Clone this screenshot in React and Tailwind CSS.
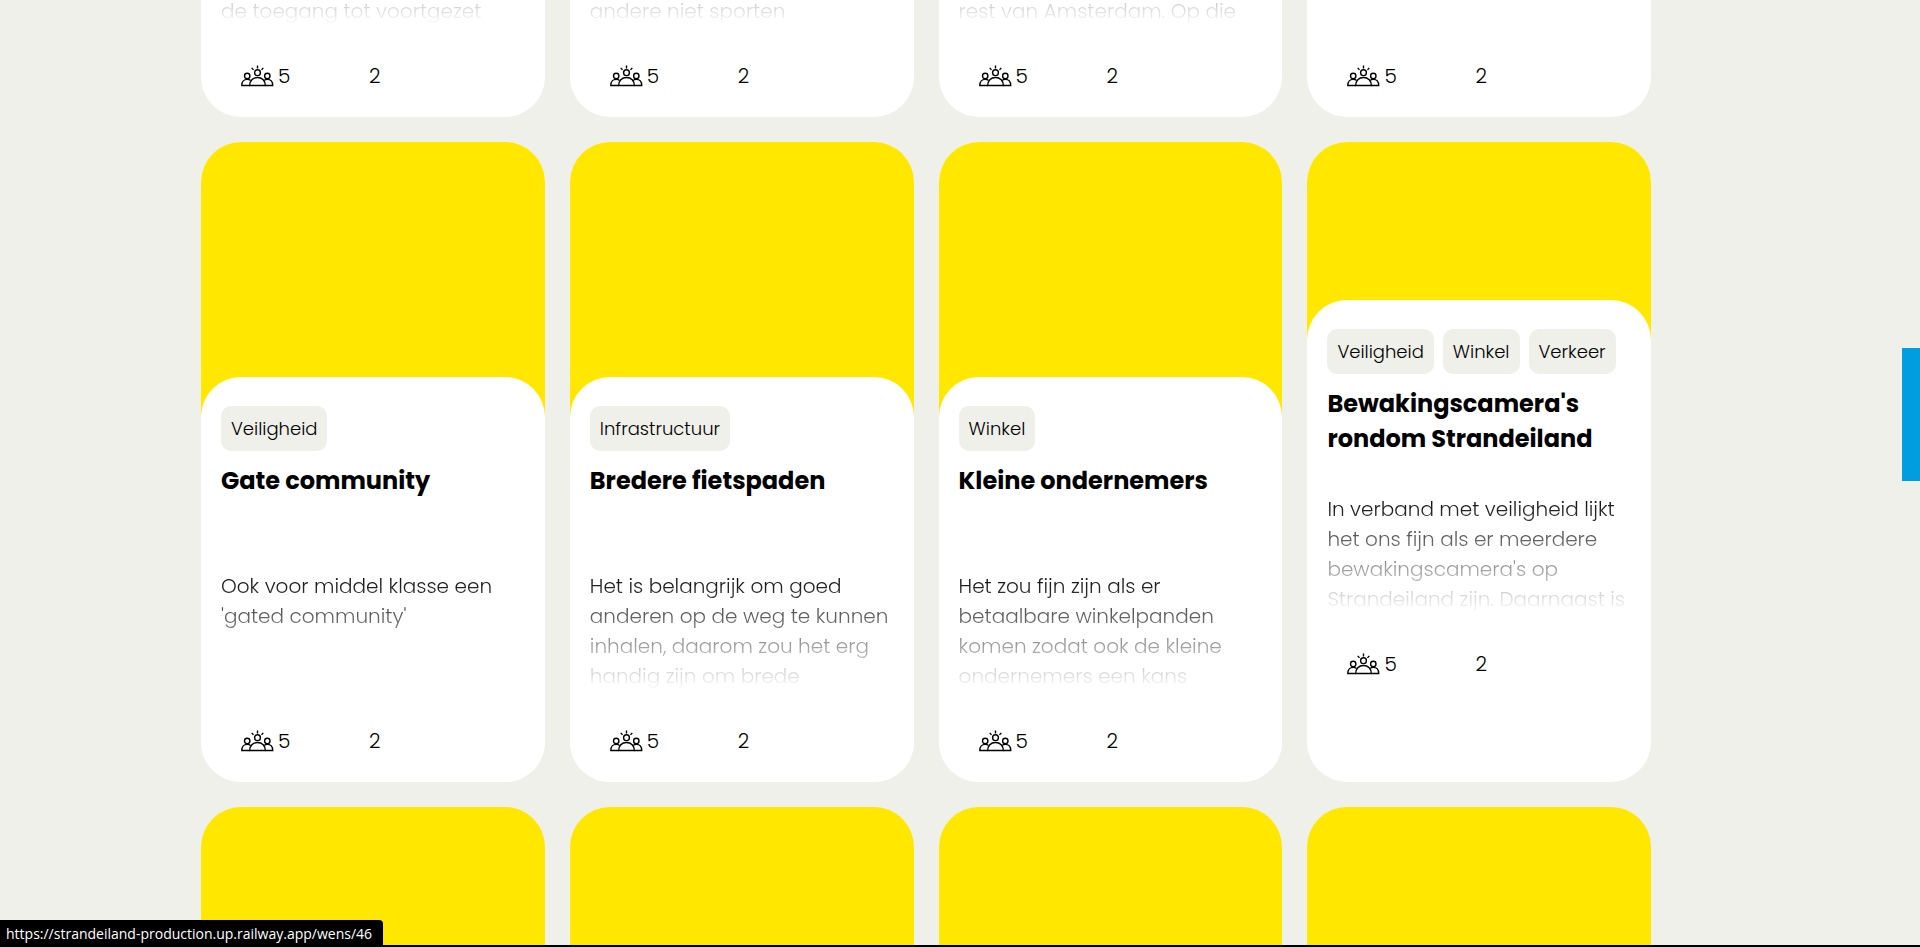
const wishes = [
  {
    id: 46,
    tags: ["Veiligheid"],
    title: ["Gate community"],
    text: ["Ook voor middel klasse een", "'gated community'"],
  },
  {
    id: 47,
    tags: ["Infrastructuur"],
    title: ["Bredere fietspaden"],
    text: [
      "Het is belangrijk om goed",
      "anderen op de weg te kunnen",
      "inhalen, daarom zou het erg",
      "handig zijn om brede",
    ],
  },
  {
    id: 48,
    tags: ["Winkel"],
    title: ["Kleine ondernemers"],
    text: [
      "Het zou fijn zijn als er",
      "betaalbare winkelpanden",
      "komen zodat ook de kleine",
      "ondernemers een kans",
    ],
  },
  {
    id: 49,
    compact: true,
    tags: ["Veiligheid", "Winkel", "Verkeer"],
    title: ["Bewakingscamera's", "rondom Strandeiland"],
    text: [
      "In verband met veiligheid lijkt",
      "het ons fijn als er meerdere",
      "bewakingscamera's op",
      "Strandeiland zijn. Daarnaast is",
    ],
  },
];

const previous = [
  { id: 42, text: ["de toegang tot voortgezet"] },
  { id: 43, text: ["andere niet sporten"] },
  { id: 44, text: ["rest van Amsterdam. Op die"] },
  { id: 45, text: [] },
];

const upcoming = [50, 51, 52, 53];

function PeopleIcon() {
  return (
    <svg
      viewBox="0 0 33 22"
      className="h-[22px] w-[33px] shrink-0"
      fill="none"
      stroke="currentColor"
      strokeWidth="1.4"
      aria-hidden="true"
    >
      <circle cx="16.5" cy="7.7" r="2.9" />
      <circle cx="6.2" cy="11" r="2.7" />
      <circle cx="26.3" cy="11" r="2.7" />
      <path d="M16.5 0.4v3M10.7 2.9l1.8 2M22.3 2.9l-1.8 2" />
      <path d="M8.7 20.5c0-4.6 3-8 7.8-8s7.8 3.4 7.8 8z" />
      <path d="M9.6 15.5c-.9-.8-2-1.1-3.4-1.1-3.2 0-5.4 2.4-5.4 6.1h7.9M23.1 15.5c.9-.8 2-1.1 3.2-1.1 3.2 0 5.4 2.4 5.4 6.1h-7.4" />
    </svg>
  );
}

function Excerpt({ lines, atEnd }) {
  return (
    <p
      className={
        "flex h-[120px] flex-col overflow-hidden whitespace-nowrap text-[20px] leading-[30px] mask-b-from-0% mask-b-to-100% " +
        (atEnd ? "justify-end" : "justify-start")
      }
    >
      {lines.map((line) => (
        <span key={line} className="block">
          {line}{" "}
        </span>
      ))}
    </p>
  );
}

function Stats() {
  return (
    <div className="flex h-[30px] items-center pl-5 text-[20px] leading-[30px]">
      <span className="flex w-32 items-center gap-1">
        <PeopleIcon />5
      </span>
      <span>2</span>
    </div>
  );
}

function WishCard({ wish }) {
  return (
    <a
      href={"/wens/" + wish.id}
      className="block overflow-hidden rounded-[40px] bg-white"
    >
      <div
        className={
          "bg-[#ffe700] " + (wish.compact ? "h-[198px]" : "h-[275px]")
        }
      />
      <div className="-mt-10 rounded-t-[40px] bg-white px-5 pt-[29px] pb-[26px]">
        <ul className="flex gap-[9px]">
          {wish.tags.map((tag) => (
            <li
              key={tag}
              className="rounded-[10px] bg-[#eff0ea] px-2.5 text-[18px] leading-[45px]"
            >
              {tag}
            </li>
          ))}
        </ul>
        <h2 className="mt-3 h-[108px] text-[24px] leading-[35px] font-bold whitespace-nowrap">
          {wish.title.map((line) => (
            <span key={line} className="block">
              {line}{" "}
            </span>
          ))}
        </h2>
        <Excerpt lines={wish.text} />
        <div className="mt-[35px]">
          <Stats />
        </div>
      </div>
    </a>
  );
}

export default function App() {
  return (
    <div className="relative h-screen overflow-hidden border-b-2 border-black bg-[#eff0ea] font-['Poppins','Inter',sans-serif] font-light text-black">
      <main className="flex flex-col gap-[25px] pr-[14%] pl-[201px]">
        <section className="grid h-[117px] grid-cols-4 content-end gap-[25px]">
          {previous.map((wish) => (
            <a
              key={wish.id}
              href={"/wens/" + wish.id}
              className="block rounded-b-[40px] bg-white px-5 pb-[26px]"
            >
              <Excerpt lines={wish.text} atEnd />
              <div className="mt-[35px]">
                <Stats />
              </div>
            </a>
          ))}
        </section>
        <section className="grid grid-cols-4 gap-[25px]">
          {wishes.map((wish) => (
            <WishCard key={wish.id} wish={wish} />
          ))}
        </section>
        <section className="grid grid-cols-4 gap-[25px]">
          {upcoming.map((id) => (
            <a
              key={id}
              href={"/wens/" + id}
              aria-label={"Wens " + id}
              className="block h-[275px] rounded-t-[40px] bg-[#ffe700]"
            />
          ))}
        </section>
      </main>
      <button
        type="button"
        aria-label="Menu"
        className="absolute top-[348px] right-0 h-[133px] w-[18px] bg-[#009de0]"
      />
      <div className="absolute -bottom-0.5 left-0 h-[27px] rounded-tr bg-black pr-[11px] pl-[6px] font-['Segoe_UI','Open_Sans',sans-serif] text-[14px] leading-[27px] font-normal text-white">
        https://strandeiland-production.up.railway.app/wens/46
      </div>
    </div>
  );
}
